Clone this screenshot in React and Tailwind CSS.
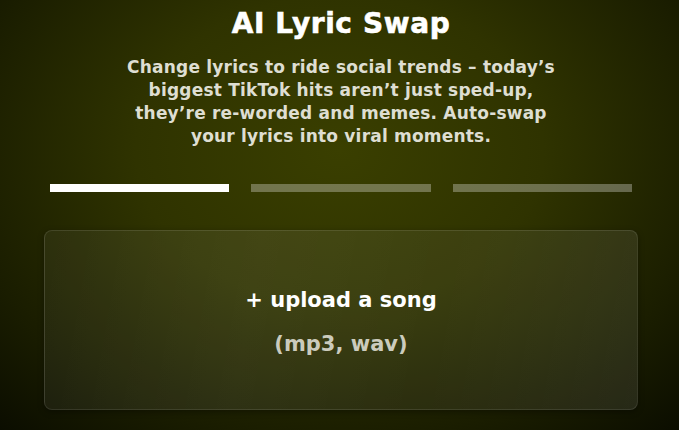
import React from 'react';

const lines = [
  "Change lyrics to ride social trends \u2013 today\u2019s",
  "biggest TikTok hits aren\u2019t just sped-up,",
  "they\u2019re re-worded and memes. Auto-swap",
  "your lyrics into viral moments.",
];

const steps = [true, false, false];

export default function App() {
  return (
    <div
      className="min-h-screen w-full pl-[3px] bg-[radial-gradient(ellipse_75%_90%_at_50%_35%,#3a3f00_0%,#2f3300_40%,#1a1d00_75%,#0a0c00_100%)] font-['DejaVu_Sans',sans-serif] overflow-hidden"
    >
      <div className="mx-auto w-[594px] flex flex-col items-center pt-[8px]">
        <h1 className="text-[28px] leading-[32px] font-bold tracking-[0.6px] text-white [-webkit-text-stroke:0.6px_white]">
          AI Lyric Swap
        </h1>

        <p className="mt-4 text-center text-[17px] leading-[23px] font-bold tracking-[0.2px] text-[#deded2]">
          {lines.map((l, i) => (
            <React.Fragment key={i}>
              {l}
              {i < lines.length - 1 && <br />}
            </React.Fragment>
          ))}
        </p>

        {/* step progress */}
        <div className="mt-[36px] w-full px-[6px] flex gap-[22px]">
          {steps.map((on, i) => (
            <div key={i} className={`flex-1 h-2 ${on ? 'bg-white' : 'bg-white/30'}`} />
          ))}
        </div>

        <button
          type="button"
          className="mt-[38px] w-full h-[180px] rounded-lg border border-white/10 bg-[linear-gradient(100deg,rgba(255,255,255,0.05)_0%,rgba(255,255,255,0.08)_35%,rgba(255,255,255,0.06)_65%,rgba(255,255,255,0.09)_100%)] shadow-[0_2px_6px_rgba(0,0,0,0.35)] flex flex-col items-center justify-center gap-4 pt-[3px]"
        >
          <span className="text-[21px] leading-[28px] font-bold text-white">+ upload a song</span>
          <span className="text-[21px] leading-[28px] font-bold text-[#cbcbbd]">(mp3, wav)</span>
        </button>
      </div>
    </div>
  );
}
